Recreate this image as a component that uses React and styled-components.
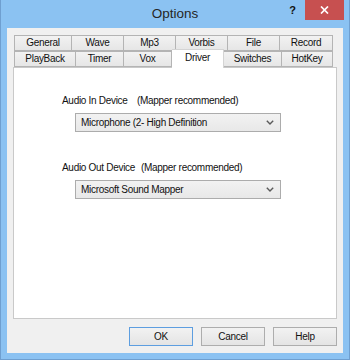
import React from "react";
import styled, { createGlobalStyle } from "styled-components";

const GlobalStyle = createGlobalStyle`
  body {
    margin: 0;
    font-family: "Liberation Sans", Arial, sans-serif;
  }
`;

const Window = styled.div`
  width: 350px;
  height: 360px;
  box-sizing: border-box;
  background: #8bc2f2;
  border: 1px solid #6f9fd0;
  border-top: none;
  display: flex;
  flex-direction: column;
`;

const TitleBar = styled.div`
  height: 28px;
  flex: none;
  display: grid;
  grid-template-columns: 1fr auto 1fr;
`;

const Title = styled.div`
  grid-column: 2;
  font-size: 13.5px;
  line-height: 28px;
  color: #262626;
`;

const Controls = styled.div`
  justify-self: end;
  display: flex;
  align-items: flex-start;
  margin-right: 5px;
`;

const HelpMark = styled.div`
  font-size: 11px;
  font-weight: bold;
  line-height: 20px;
  margin-right: 9px;
  color: #111;
`;

const CloseButton = styled.div`
  width: 39px;
  height: 20px;
  background: #c75050;
  display: flex;
  align-items: center;
  justify-content: center;
`;

const Client = styled.div`
  flex: 1;
  margin: 0 6px 6px 6px;
  background: #f0f0f0;
  padding: 7px 6px 0 6px;
  display: flex;
  flex-direction: column;
  font-size: 10px;
  letter-spacing: -0.3px;
  color: #111;
`;

const TabStrip = styled.div`
  margin-left: 1px;
  width: 319px;
`;

const TabRow = styled.div`
  display: flex;
  align-items: flex-end;
  height: 16px;
`;

const Tab = styled.div`
  flex: none;
  box-sizing: border-box;
  width: ${(p) => p.$w}px;
  height: ${(p) => (p.$active ? 19 : 16)}px;
  margin-bottom: ${(p) => (p.$active ? -1 : 0)}px;
  position: relative;
  z-index: ${(p) => (p.$active ? 1 : 0)};
  border: 1px solid ${(p) => (p.$active ? "#d4d4d4" : "#b4b4b4")};
  border-bottom: ${(p) => (p.$active ? "none" : "1px solid #b4b4b4")};
  border-left: none;
  &:first-child {
    border-left: 1px solid ${(p) => (p.$active ? "#d4d4d4" : "#b4b4b4")};
  }
  background: ${(p) =>
    p.$active ? "#ffffff" : "linear-gradient(#f2f2f2, #e6e6e6)"};
  line-height: ${(p) => (p.$active ? 15 : 14)}px;
  text-align: center;
`;

const Panel = styled.div`
  flex: none;
  height: 252px;
  box-sizing: border-box;
  background: #ffffff;
  border: 1px solid #c9c9c9;
  padding: 26px 0 0 48px;
  display: flex;
  flex-direction: column;
`;

const Group = styled.div`
  display: flex;
  flex-direction: column;
  margin-top: ${(p) => p.$top || 0}px;
`;

const Label = styled.div`
  display: flex;
  line-height: 14px;
  white-space: nowrap;
`;

const LabelName = styled.span`
  flex: none;
  width: ${(p) => p.$w}px;
`;

const Select = styled.div`
  box-sizing: border-box;
  width: 206px;
  height: 19px;
  margin: 5px 0 0 13px;
  border: 1px solid #acacac;
  background: linear-gradient(#f2f2f2, #e8e8e8);
  display: flex;
  align-items: center;
  justify-content: space-between;
  padding: 0 6px 0 5px;
`;

const ButtonRow = styled.div`
  display: flex;
  justify-content: flex-end;
  gap: 8px;
  margin-top: 8px;
`;

const Button = styled.div`
  box-sizing: border-box;
  width: 64px;
  height: 19px;
  border: 1px solid ${(p) => (p.$default ? "#5d9ee0" : "#adadad")};
  background: linear-gradient(#f2f2f2, #e4e4e4);
  line-height: 17px;
  text-align: center;
`;

const Chevron = () => (
  <svg width="8" height="5" viewBox="0 0 8 5">
    <path d="M0.8 0.8 L4 4 L7.2 0.8" fill="none" stroke="#5a5a5a" strokeWidth="1.4" />
  </svg>
);

const rowOne = [
  ["General", 58],
  ["Wave", 52],
  ["Mp3", 52],
  ["Vorbis", 52],
  ["File", 52],
  ["Record", 53],
];

const rowTwo = [
  ["PlayBack", 62],
  ["Timer", 48],
  ["Vox", 48],
  ["Driver", 52],
  ["Switches", 58],
  ["HotKey", 51],
];

export default function App() {
  return (
    <>
      <GlobalStyle />
      <Window>
        <TitleBar>
          <Title>Options</Title>
          <Controls>
            <HelpMark>?</HelpMark>
            <CloseButton>
              <svg width="9" height="8" viewBox="0 0 9 8">
                <path d="M1 0.5 L8 7.5 M8 0.5 L1 7.5" stroke="#fff" strokeWidth="1.7" />
              </svg>
            </CloseButton>
          </Controls>
        </TitleBar>
        <Client>
          <TabStrip>
            <TabRow>
              {rowOne.map(([name, w]) => (
                <Tab key={name} $w={w}>
                  {name}
                </Tab>
              ))}
            </TabRow>
            <TabRow>
              {rowTwo.map(([name, w]) => (
                <Tab key={name} $w={w} $active={name === "Driver"}>
                  {name}
                </Tab>
              ))}
            </TabRow>
          </TabStrip>
          <Panel>
            <Group>
              <Label>
                <LabelName $w={75}>Audio In Device</LabelName>
                <span>(Mapper recommended)</span>
              </Label>
              <Select>
                <span>Microphone (2- High Definition</span>
                <Chevron />
              </Select>
            </Group>
            <Group $top={29}>
              <Label>
                <LabelName $w={79}>Audio Out Device</LabelName>
                <span>(Mapper recommended)</span>
              </Label>
              <Select>
                <span>Microsoft Sound Mapper</span>
                <Chevron />
              </Select>
            </Group>
          </Panel>
          <ButtonRow>
            <Button $default>OK</Button>
            <Button>Cancel</Button>
            <Button>Help</Button>
          </ButtonRow>
        </Client>
      </Window>
    </>
  );
}
